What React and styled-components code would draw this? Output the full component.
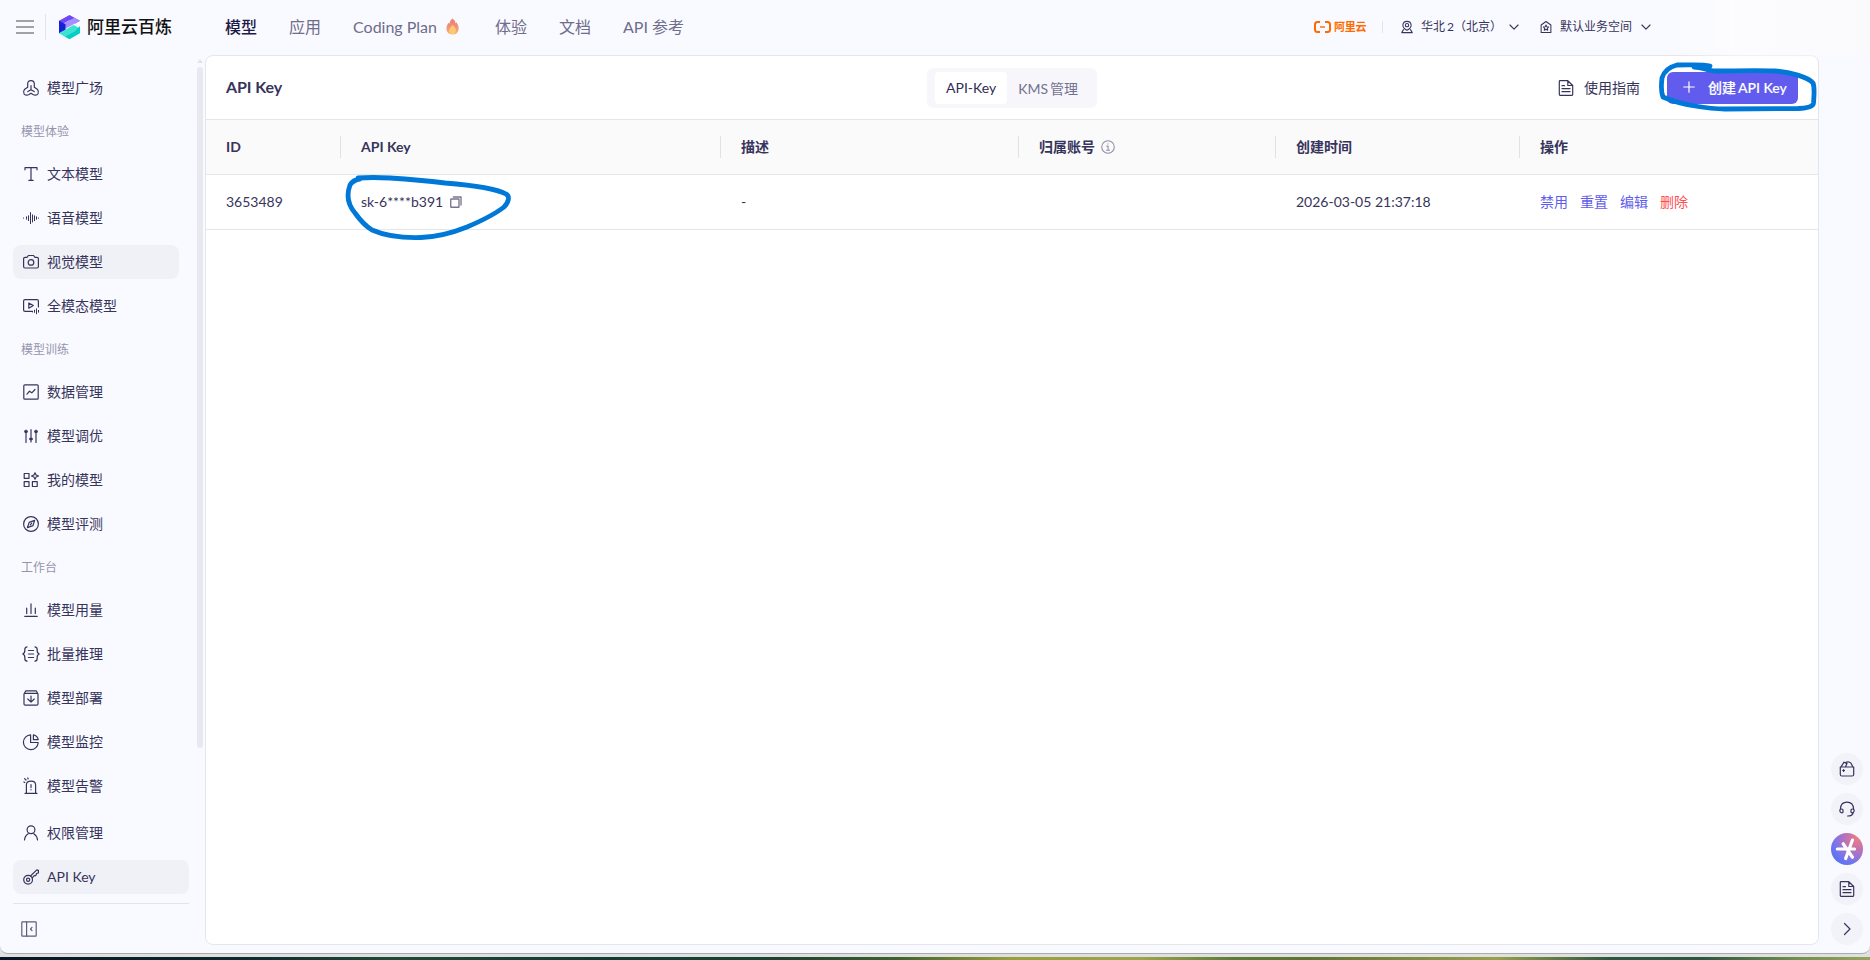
import { useId } from "react";
import styled, { createGlobalStyle, css } from "styled-components";

const GlobalStyle = createGlobalStyle`
    * {
        box-sizing: border-box;
    }

    body {
        margin: 0;
        overflow: hidden;
        background: #dfe0df;
        color: #37345c;
        font-family: Lato, "Noto Sans CJK SC", sans-serif;
        font-size: 14px;
    }
`;

/* ---------- icons ---------- */

const Icon = styled.svg.attrs({ viewBox: "0 0 16 16" })`
    flex: none;
    width: ${(p) => p.$size || 16}px;
    height: ${(p) => p.$size || 16}px;
    fill: none;
    stroke: ${(p) => p.$color || "currentColor"};
    stroke-width: ${(p) => p.$weight || 1.2};
    stroke-linecap: round;
    stroke-linejoin: round;
    overflow: visible;
`;

const icons = {
    plaza: (
        <>
            <path d="M4.7 7.2 V4 Q4.7 .6 8 .6 T11.3 4 V7.2 M4.7 7.2 L1.7 9.2 Q-.2 11.4 1 13.8 Q3.2 16.2 6 14.6 L8 13.3 L10 14.6 Q12.8 16.2 15 13.8 Q16.2 11.4 14.3 9.2 L11.3 7.2" />
            <path d="M8 5.5 V9.7 L4.8 11.6 M8 9.7 L11.2 11.6" />
        </>
    ),
    text: <path d="M2 3.8 V1.7 H14 V3.8 M8 1.7 V14.3 M5.8 14.3 H10.2" />,
    voice: (
        <path
            d="M.5 8 V8.2 M3.5 6.8 V9.2 M5.5 5.8 V10.6 M7.5 2.6 V13.6 M9.5 4.8 V12 M11.5 5.8 V10.6 M13.5 6.8 V9.2 M15.5 8 V8.2"
            strokeWidth="1"
        />
    ),
    camera: (
        <>
            <path d="M2 3.3 H4 L5.4 1.5 H10.6 L12 3.3 H14 Q15.4 3.3 15.4 4.7 V12.5 Q15.4 14 14 14 H2 Q.6 14 .6 12.5 V4.7 Q.6 3.3 2 3.3 Z" />
            <circle cx="8" cy="8.4" r="2.8" />
        </>
    ),
    omni: (
        <>
            <path d="M8.5 13.4 H2 Q.6 13.4 .6 12 V3 Q.6 1.6 2 1.6 H14 Q15.4 1.6 15.4 3 V9" />
            <path d="M5.8 5 V10.2 L10.3 7.6 Z" />
            <path d="M9.5 13.2 V14 M11.5 12.2 V14.4 M13.5 10.8 V15.8 M15.5 12.4 V14.2" strokeWidth="1" />
        </>
    ),
    data: (
        <>
            <rect x=".8" y=".8" width="14.4" height="14.4" rx="1" />
            <path d="M4 10.2 L6.5 7.2 L8.8 8.8 L12 5.5" />
        </>
    ),
    tune: (
        <>
            <path d="M3 2 V14.5 M8 1.5 V14 M13 2 V14.5" />
            <path d="M2.4 3.6 H3.6 M7.4 11 H8.6 M12.4 3.6 H13.6" strokeWidth="2.6" />
        </>
    ),
    models: (
        <>
            <rect x="1.2" y="1.5" width="4.8" height="4.8" />
            <rect x="1.2" y="9.7" width="4.8" height="4.8" />
            <rect x="9.4" y="9.7" width="4.8" height="4.8" />
            <path d="M12 .8 L13.1 3 L15.5 4 L13.1 5 L12 7.2 L10.9 5 L8.5 4 L10.9 3 Z" />
        </>
    ),
    compass: (
        <>
            <circle cx="8" cy="8" r="7.4" />
            <path d="M11.6 4.4 L10 9.6 L4.4 11.6 L6.2 6.4 Z M7.2 8.8 L8.8 7.2" />
        </>
    ),
    usage: <path d="M1.8 14.4 H14.2 M3.7 6.2 V11.5 M8 1.8 V11.5 M12.3 6.2 V11.5" />,
    batch: (
        <path d="M4 .8 Q1.6 1.2 1.8 4 Q2.2 6.8 -.2 8 Q2.2 9.2 1.8 12 Q1.6 14.8 4 15.2 M12 .8 Q14.4 1.2 14.2 4 Q13.8 6.8 16.2 8 Q13.8 9.2 14.2 12 Q14.4 14.8 12 15.2 M5.4 4.5 H10.6 M5.4 8 H10.6 M5.4 11.5 H10.6" />
    ),
    deploy: (
        <>
            <path d="M1 4 L2.8 .8 H13.2 L15 4 V14 Q15 15.2 13.8 15.2 H2.2 Q1 15.2 1 14 Z M1.5 3.3 H14.5" />
            <path d="M8 6 V12 M4.8 9 L8 12.2 L11.2 9" />
        </>
    ),
    monitor: (
        <>
            <path d="M7.6 .8 A7.4 7.4 0 1 0 15.2 8.5 H7.6 Z" />
            <path d="M10.4 .8 Q14.7 1.8 15.2 5.7 H10.4 Z" />
        </>
    ),
    alert: (
        <>
            <path d="M2 15.4 H14 M3.4 15.2 V7 Q3.4 3.2 8 3.2 T12.6 7 V15.2 M8 6.6 V9.6 M8 11.6 V11.8" />
            <path d="M.9 4 L1.8 4.5 M1.6 .6 L3 2 M4.8 -.2 L5.1 1" />
        </>
    ),
    user: (
        <>
            <circle cx="8" cy="4.7" r="3.9" />
            <path d="M1.5 15 Q1.9 10.7 5.2 8.7 M10.8 8.7 Q14.1 10.7 14.5 15" />
        </>
    ),
    key: (
        <>
            <circle cx="5.1" cy="10.8" r="4.4" />
            <circle cx="5.1" cy="10.8" r="1.6" />
            <path d="M7.5 7 L13.8 .9 L15.4 1.3 V4 L13.5 4.5 L13 6.4 L11 6.8 L9.2 8.8" />
        </>
    ),
    collapse: (
        <>
            <rect x=".8" y=".8" width="14.4" height="14.4" rx=".6" />
            <path d="M5.6 .8 V15.2 M11 6.4 L9.5 8 L11 9.6" />
        </>
    ),
    doc: (
        <>
            <path d="M9.8 .7 H2 Q1.3 .7 1.3 1.5 V14.5 Q1.3 15.3 2 15.3 H14 Q14.7 15.3 14.7 14.5 V5.5 Z V5.5 H14.7" />
            <path d="M4 5.7 H6.5 M4 8.7 H12 M4 11.7 H12" />
        </>
    ),
    plus: <path d="M8 1 V15 M1 8 H15" />,
    chevronDown: <path d="M1.5 4.8 L8 11.5 L14.5 4.8" />,
    chevronRight: <path d="M5.5 2.5 L11 8 L5.5 13.5" />,
    location: (
        <>
            <path d="M8 12.3 Q2.5 9.5 2.5 5.5 Q2.8 .5 8 .5 T13.5 5.5 Q13.5 9.5 8 12.3 Z" />
            <circle cx="8" cy="5.5" r="2.2" />
            <path d="M3.3 11.5 L1 15.5 H15 L12.7 11.5" />
        </>
    ),
    home: (
        <>
            <path d="M1.5 5.3 L8 .6 L14.5 5.3 V15.3 H1.5 Z" />
            <path d="M8 5.4 L9.1 7.8 L11.6 8 L9.8 9.8 L10.3 12.3 L8 11 L5.7 12.3 L6.2 9.8 L4.4 8 L6.9 7.8 Z" />
        </>
    ),
    info: (
        <>
            <circle cx="8" cy="8" r="7.2" />
            <path d="M8 4.3 V4.5 M6.7 7 H8.1 V11.6 M6.4 11.7 H9.8" />
        </>
    ),
    copy: (
        <>
            <rect x="1" y="4" width="11" height="11" rx=".5" />
            <path d="M4.5 1.3 H14.7 V12" />
        </>
    ),
    toolbox: (
        <>
            <path d="M1.3 6 H14.7 V13.5 Q14.7 15 13.2 15 H2.8 Q1.3 15 1.3 13.5 Z M2 5.8 L5 1.2 L8 2.6 L6.5 5.8 M6.5 1.6 Q9.5 -.3 12 2.2 L13.8 5.8" />
            <path d="M4.6 8.6 V10.4 M3.7 9.5 H5.5" />
        </>
    ),
    headset: (
        <path d="M2.8 11.8 Q.8 11.6 .8 9.8 Q.8 8 2.8 8 Q4 8 4 9.3 V10.7 Q4 12 2.8 11.8 M13.2 11.8 Q15.2 11.6 15.2 9.8 Q15.2 8 13.2 8 Q12 8 12 9.3 V10.7 Q12 12 13.2 11.8 M1.4 8 Q1.8 1.2 8 1.2 T14.6 8 M14.2 11.6 Q13.6 15 8.6 15" />
    ),
};

function Glyph({ name, ...rest }) {
    return <Icon {...rest}>{icons[name]}</Icon>;
}

/* ---------- header ---------- */

const Window = styled.div`
    position: relative;
    width: 1870px;
    height: 954px;
    overflow: hidden;
    background: #f9faff;
    border-bottom: 1px solid #a9abad;
    border-radius: 0 0 8px 8px;
`;

const Header = styled.header`
    display: flex;
    align-items: center;
    height: 55px;
    padding: 0 0 2px 16px;
`;

const MenuIcon = styled.svg`
    width: 18px;
    height: 14px;
    stroke: #858587;
    stroke-width: 1.6;
`;

const Divider = styled.span`
    width: 1px;
    height: ${(p) => p.$height}px;
    margin: ${(p) => p.$margin};
    background: #e3e4eb;
`;

const Brand = styled.div`
    display: flex;
    align-items: center;
    width: 167px;
    margin-left: 12px;
    color: #111;
    font-size: 17px;
    font-weight: 500;
    line-height: 24px;

    svg {
        width: 23px;
        height: 26px;
        margin-right: 6px;
    }
`;

const Nav = styled.nav`
    display: flex;
    align-items: center;
    gap: 32px;
`;

const NavItem = styled.a`
    display: flex;
    align-items: center;
    gap: 9px;
    color: ${(p) => (p.$active ? "#1d1a45" : "#6f6c8c")};
    font-size: 16px;
    font-weight: ${(p) => (p.$active ? 500 : 400)};
    line-height: 24px;
    white-space: pre;

    svg {
        width: 13px;
        height: 17px;
        margin-right: 4px;
    }
`;

const Region = styled.div`
    display: flex;
    align-items: center;
    margin-left: auto;
    width: 556px;
    font-size: 12px;
    line-height: 18px;
`;

const AliCloud = styled.div`
    display: flex;
    align-items: center;
    gap: 3px;
    width: 68px;
    color: #ff6a00;
    font-size: 11px;
    font-weight: 700;
    letter-spacing: -0.3px;

    svg {
        width: 17px;
        height: 12px;
    }
`;

const Picker = styled.div`
    display: flex;
    align-items: center;
    width: ${(p) => p.$width}px;

    & + & {
        margin-left: 21px;
    }

    > span {
        margin: 0 auto 0 8px;
        white-space: nowrap;
    }
`;

/* ---------- sidebar ---------- */

const Body = styled.div`
    display: flex;
    height: 890px;
`;

const Sidebar = styled.aside`
    position: relative;
    flex: none;
    width: 205px;
    padding: 11px 16px 0 13px;
`;

const ScrollBar = styled.div`
    position: absolute;
    top: 4px;
    right: 2px;
    width: 6px;

    &::before {
        content: "";
        display: block;
        border: 3px solid transparent;
        border-top: 0;
        border-bottom: 4px solid #e2e3ea;
    }

    &::after {
        content: "";
        display: block;
        height: 681px;
        margin-top: 4px;
        border-radius: 3px;
        background: #e8e9ef;
    }
`;

const GroupLabel = styled.div`
    height: 42px;
    padding-left: 8px;
    color: #9694ad;
    font-size: 12px;
    line-height: 44px;
`;

const MenuItem = styled.a`
    display: flex;
    align-items: center;
    gap: 8px;
    width: ${(p) => (p.$wide ? 176 : 166)}px;
    height: 34px;
    margin: 5px 0 10px;
    padding-left: 10px;
    border-radius: 8px;
    line-height: 22px;

    & + & {
        margin-top: 0;
    }

    ${(p) =>
        p.$active &&
        css`
            background: #f0f1f6;
        `}
`;

const MenuGroup = styled.div`
    display: flow-root;

    ${MenuItem}:last-child {
        margin-bottom: 5px;
    }
`;

const SidebarFooter = styled.div`
    width: 176px;
    margin-top: 8px;

    .toggle {
        height: 50px;
        margin-top: -1px;
        padding: 17px 8px;
        border-top: 1px solid #e3e4eb;
    }
`;

/* ---------- panel ---------- */

const Panel = styled.main`
    flex: none;
    width: 1614px;
    height: 890px;
    border: 1px solid #e5e6ec;
    border-radius: 8px;
    background: #fff;
    overflow: hidden;
`;

const PanelHead = styled.div`
    display: grid;
    grid-template-columns: 1fr 170px 1fr;
    align-items: center;
    height: 64px;
    padding: 0 20px;
    border-bottom: 1px solid #e5e6ec;
`;

const Title = styled.h1`
    margin: 0;
    padding-bottom: 2px;
    font-size: 16px;
    font-weight: 700;
    letter-spacing: -0.1px;
    line-height: 24px;
`;

const Segmented = styled.div`
    display: flex;
    height: 40px;
    padding: 4px 8px;
    border-radius: 6px;
    background: #f7f7fb;
`;

const Segment = styled.button`
    height: 32px;
    padding: 0 11px;
    border: 0;
    border-radius: 4px;
    background: ${(p) => (p.$active ? "#fff" : "transparent")};
    color: ${(p) => (p.$active ? "#2f2c55" : "#74718f")};
    font: inherit;
    white-space: nowrap;
`;

/* small gap between Latin and Chinese runs */
const Run = styled.span`
    margin-left: 2px;
`;

const Actions = styled.div`
    display: flex;
    align-items: center;
    justify-content: flex-end;
    gap: 27px;
`;

const GuideLink = styled.a`
    display: flex;
    align-items: center;
    gap: 10px;
    line-height: 22px;
`;

const CreateButton = styled.button`
    display: flex;
    align-items: center;
    gap: 13px;
    width: 131px;
    height: 32px;
    padding: 0 0 1px 16px;
    border: 0;
    border-radius: 6px;
    background: #615ced;
    color: #fff;
    font: inherit;
    font-weight: 500;
    -webkit-text-stroke: 0.15px #fff;
    white-space: nowrap;
`;

const Row = styled.div`
    display: grid;
    grid-template-columns: 135px 380px 298px 257px 244px 1fr;
    align-items: center;
    height: 55px;
    border-bottom: 1px solid #e5e6ec;
    background: ${(p) => (p.$head ? "#fafafa" : "#fff")};
    font-weight: ${(p) => (p.$head ? 700 : 400)};
`;

const Cell = styled.div`
    display: flex;
    align-items: center;
    gap: ${(p) => p.$gap || 7}px;
    height: 22px;
    padding-left: 20px;
    line-height: 22px;
    border-right: ${(p) => (p.$split ? "1px solid #e1e2e9" : "0")};
`;

const Action = styled.a`
    color: ${(p) => (p.$danger ? "#ff4d4f" : "#615ced")};
`;

/* ---------- floating tools and marks ---------- */

const Dock = styled.div`
    display: flex;
    flex-direction: column;
    justify-content: flex-end;
    gap: 8px;
    padding-left: 12px;
`;

const DockButton = styled.button`
    display: flex;
    align-items: center;
    justify-content: center;
    width: 32px;
    height: 32px;
    padding: 0;
    border: 0;
    border-radius: 50%;
    color: inherit;
    background: ${(p) =>
        p.$accent
            ? "radial-gradient(circle at 82% 18%, #ee7c83 0, #b472bd 36%, #7676ec 62%, #3d6cfb 100%)"
            : "#f2f3f8"};
`;

const Haze = styled.div`
    position: absolute;
    top: 0;
    right: 0;
    width: 200px;
    height: 60px;
    background: linear-gradient(90deg, rgba(252, 252, 254, 0), #fcfcfe 35%, #fafafd);
    mask-image: linear-gradient(#000 85%, transparent);
`;

const Marker = styled.svg`
    position: absolute;
    left: ${(p) => p.$x}px;
    top: ${(p) => p.$y}px;
    width: ${(p) => p.$w}px;
    height: ${(p) => p.$h}px;
    fill: none;
    stroke: #0078d7;
    stroke-width: 4.8;
    stroke-linecap: round;
    stroke-linejoin: round;
    pointer-events: none;
`;

const Desktop = styled.div`
    height: 3px;
    margin-top: 3px;
    background: linear-gradient(
        90deg,
        #081423 0,
        #0b2a2e 13%,
        #1f4a38 21%,
        #123a34 32%,
        #1c4430 42%,
        #3d622e 48%,
        #98a03c 54%,
        #9ca648 61%,
        #5b7a38 66%,
        #5f7333 70%,
        #98a04c 80%,
        #2d5840 86%,
        #2c5540 91%,
        #6f9050 96%,
        #97a35c 100%
    );
`;

function Flame() {
    const id = useId();
    return (
        <svg viewBox="0 0 13 17">
            <linearGradient id={id} x2="0" y2="1">
                <stop stopColor="#ea7b72" />
                <stop offset=".55" stopColor="#f0937a" />
                <stop offset="1" stopColor="#f8b873" />
            </linearGradient>
            <path
                d="M6.4 .5 Q9.4 2.5 9.6 5.4 L10.5 4.3 Q12.8 7.5 12.6 11 Q12.2 16.5 6.5 16.5 Q.7 16.3 .4 11 Q.4 7.5 2.4 4.7 L3.2 6 Q3.8 2.5 6.4 .5 Z"
                fill={`url(#${id})`}
            />
            <path d="M6.7 7 Q10.2 10.2 9.9 13 Q9.5 16 6.6 16.1 Q3.3 15.9 3.2 12.8 Q3.3 9.5 6.7 7 Z" fill="#fdc873" />
        </svg>
    );
}

const groups = [
    { items: [["plaza", "模型广场"]] },
    {
        label: "模型体验",
        items: [
            ["text", "文本模型"],
            ["voice", "语音模型"],
            ["camera", "视觉模型", true],
            ["omni", "全模态模型"],
        ],
    },
    {
        label: "模型训练",
        items: [
            ["data", "数据管理"],
            ["tune", "模型调优"],
            ["models", "我的模型"],
            ["compass", "模型评测"],
        ],
    },
    {
        label: "工作台",
        items: [
            ["usage", "模型用量"],
            ["batch", "批量推理"],
            ["deploy", "模型部署"],
            ["monitor", "模型监控"],
            ["alert", "模型告警"],
        ],
    },
];

function App() {
    return (
        <>
            <GlobalStyle />
            <Window>
                <Header>
                    <MenuIcon viewBox="0 0 18 14">
                        <path d="M0 1 H18 M0 7 H18 M0 13 H18" />
                    </MenuIcon>
                    <Divider $height={26} $margin="0 0 0 11px" />
                    <Brand>
                        <svg viewBox="0 0 23 26">
                            <path d="M11.5 1 L22 6.7 L17.3 9.5 L11.5 6.2 L1 12 V6.7 Z" fill="#7047f5" />
                            <path d="M11.5 12.5 L1 18 V12 L16.5 3.8 L22 6.7 Z" fill="#a68fff" />
                            <path d="M1 6.7 L7.5 10.3 V16 L1 19.3 Z" fill="#1421d4" />
                            <path d="M1 19.3 L15.5 11 L22 14.6 L6.5 22.5 Z" fill="#3be3d0" />
                            <path d="M22 12 V19.3 L11.5 25.3 L6.5 22.5 L17 17 Z" fill="#04cfc6" />
                        </svg>
                        阿里云百炼
                    </Brand>
                    <Nav>
                        <NavItem $active>模型</NavItem>
                        <NavItem>应用</NavItem>
                        <NavItem>
                            Coding Plan
                            <Flame />
                        </NavItem>
                        <NavItem>体验</NavItem>
                        <NavItem>文档</NavItem>
                        <NavItem>API 参考</NavItem>
                    </Nav>
                    <Region>
                        <AliCloud>
                            <svg viewBox="0 0 17 12" fill="none" stroke="#ff6a00" strokeWidth="2">
                                <path d="M6 1 H3.4 Q1 1 1 3.5 V8.5 Q1 11 3.4 11 H6 M11 1 H13.6 Q16 1 16 3.5 V8.5 Q16 11 13.6 11 H11" />
                                <path d="M6 6 H11" strokeWidth="1.4" />
                            </svg>
                            阿里云
                        </AliCloud>
                        <Divider $height={12} $margin="0 18px 0 0" />
                        <Picker $width={118}>
                            <Glyph name="location" $size={12} $weight={1.4} />
                            <span>
                                华北<Run>2（北京）</Run>
                            </span>
                            <Glyph name="chevronDown" $size={10} $weight={1.8} />
                        </Picker>
                        <Picker $width={111}>
                            <Glyph name="home" $size={12} $weight={1.4} />
                            <span>默认业务空间</span>
                            <Glyph name="chevronDown" $size={10} $weight={1.8} />
                        </Picker>
                    </Region>
                </Header>
                <Body>
                    <Sidebar>
                        {groups.map((group, i) => (
                            <MenuGroup key={i}>
                                {group.label && <GroupLabel>{group.label}</GroupLabel>}
                                {group.items.map(([icon, label, active]) => (
                                    <MenuItem key={label} $active={active}>
                                        <Glyph name={icon} />
                                        {label}
                                    </MenuItem>
                                ))}
                            </MenuGroup>
                        ))}
                        <SidebarFooter>
                            <MenuItem $wide>
                                <Glyph name="user" />
                                权限管理
                            </MenuItem>
                            <MenuItem $wide $active>
                                <Glyph name="key" />
                                API Key
                            </MenuItem>
                            <div className="toggle">
                                <Glyph name="collapse" $color="#5f5c7c" />
                            </div>
                        </SidebarFooter>
                        <ScrollBar />
                    </Sidebar>
                    <Panel>
                        <PanelHead>
                            <Title>API Key</Title>
                            <Segmented>
                                <Segment $active>API-Key</Segment>
                                <Segment>
                                    KMS<Run>管理</Run>
                                </Segment>
                            </Segmented>
                            <Actions>
                                <GuideLink>
                                    <Glyph name="doc" $size={16} />
                                    使用指南
                                </GuideLink>
                                <CreateButton>
                                    <Glyph name="plus" $size={12} $weight={1.6} />
                                    <span>
                                        创建<Run>API Key</Run>
                                    </span>
                                </CreateButton>
                            </Actions>
                        </PanelHead>
                        <Row $head>
                            <Cell $split>ID</Cell>
                            <Cell $split>API Key</Cell>
                            <Cell $split>描述</Cell>
                            <Cell $split $gap={6}>
                                归属账号
                                <Glyph name="info" $size={14} $color="#8f8da5" />
                            </Cell>
                            <Cell $split>创建时间</Cell>
                            <Cell>操作</Cell>
                        </Row>
                        <Row>
                            <Cell>3653489</Cell>
                            <Cell>
                                sk-6****b391
                                <Glyph name="copy" $size={12} $color="#77748f" $weight={1.8} />
                            </Cell>
                            <Cell>-</Cell>
                            <Cell />
                            <Cell>2026-03-05 21:37:18</Cell>
                            <Cell $gap={12}>
                                <Action>禁用</Action>
                                <Action>重置</Action>
                                <Action>编辑</Action>
                                <Action $danger>删除</Action>
                            </Cell>
                        </Row>
                    </Panel>
                    <Dock>
                        <DockButton>
                            <Glyph name="toolbox" />
                        </DockButton>
                        <DockButton>
                            <Glyph name="headset" />
                        </DockButton>
                        <DockButton $accent>
                            <Icon $size={22} $color="#fff" $weight={2.3}>
                                <path d="M1 8 H13.5 M12 1.5 L7 15 M5.2 4.2 L12 14" />
                            </Icon>
                        </DockButton>
                        <DockButton>
                            <Glyph name="doc" />
                        </DockButton>
                        <DockButton>
                            <Glyph name="chevronRight" />
                        </DockButton>
                    </Dock>
                </Body>
                <Haze />
                <Marker $x={340} $y={170} $w={175} $h={75} viewBox="340 170 175 75">
                    <path d="M360 179 Q353 180 350 185 C346 196 349 206 355 213 C360 220 367 227 372 230 C388 237 405 238 421 237.5 C436 237 452 233 467 227 C481 221 494 215 504 207 C509 202 510 196 506 194 C495 188 470 185 445 183 C420 180 405 179 390 178 Q372 177 358 178" />
                </Marker>
                <Marker $x={1655} $y={58} $w={165} $h={56} viewBox="1655 58 165 56">
                    <path d="M1710 66 C1702 64 1690 65 1677 65 Q1665 68 1662 78 C1661 86 1661 92 1663 97 C1672 101 1683 104 1695 106 Q1712 109 1725 109 L1798 108.5 Q1813 108 1813.5 103 C1814 95 1815 88 1813 83 C1808 77 1790 72 1775 71 C1755 70 1735 71 1716 71 C1708 71 1702 67 1694 67" />
                </Marker>
            </Window>
            <Desktop />
        </>
    );
}

export default App;
